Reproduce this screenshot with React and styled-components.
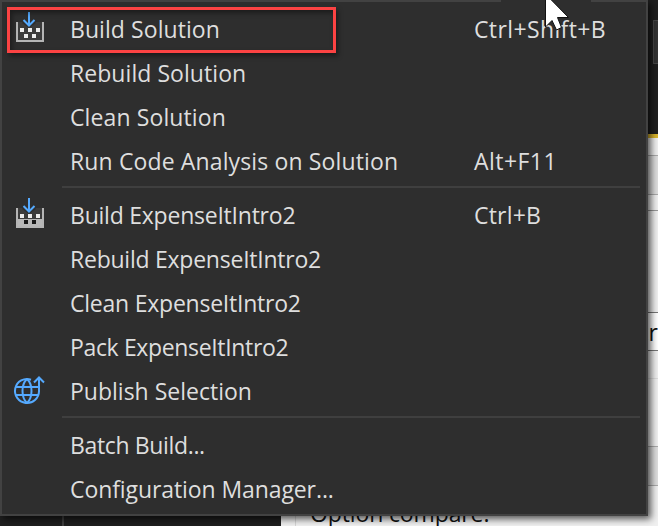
import React from "react";
import styled, { createGlobalStyle } from "styled-components";

const GlobalStyle = createGlobalStyle`
  * { box-sizing: border-box; }
  body { margin: 0; overflow: hidden; background: #1f1f1f; }
`;

const Screen = styled.main`
  position: relative;
  width: 658px;
  height: 526px;
  overflow: hidden;
  background: #1f1f1f;
  font-family: "Open Sans", "Noto Sans", sans-serif;
  font-size: 23px;
`;

const Workspace = styled.div`
  display: grid;
  grid-template-columns: 64px 217px 1fr;
  height: 526px;
`;

const Gutter = styled.div`
  border-right: 2px solid #3f3f3f;
`;

const EditorPane = styled.div`
  background: #1f1f1f;
`;

const DocumentPane = styled.div`
  display: flex;
  flex-direction: column;
  min-width: 0;
`;

const ToolStrip = styled.div`
  height: 134px;
  display: flex;
  justify-content: flex-end;
  padding-top: 20px;
`;

const ToolBox = styled.div`
  width: 5px;
  height: 44px;
  background: #333;
  border: 1px solid #484848;
  border-right: 0;
`;

const Band = styled.div`
  flex: none;
  display: flex;
  align-items: center;
  justify-content: flex-end;
  height: ${(p) => p.$h}px;
  background: ${(p) => p.$bg || "#f0f0f0"};
  border-bottom: ${(p) => (p.$line ? `1px solid ${p.$line}` : "0")};
  color: #111;
  line-height: 30px;
`;

const OptionBand = styled.div`
  flex: 1;
  margin-left: 14px;
  padding: 10px 0 0 14px;
  border-left: 1px solid #d5d5d5;
  color: #111;
  line-height: 34px;
  letter-spacing: -0.13px;
  white-space: nowrap;
`;

const OptionArea = styled.div`
  flex: 1;
  display: flex;
  min-height: 0;
  background: #f0f0f0;
`;

const Menu = styled.nav`
  position: absolute;
  left: 0;
  top: 0;
  width: 648px;
  height: 516px;
  padding-top: 6px;
  border: 2px solid #424242;
  background: #2e2e2e;
  box-shadow: 3px 3px 7px rgba(0, 0, 0, 0.65);
`;

const MenuOpening = styled.div`
  position: absolute;
  left: 499px;
  top: -2px;
  width: 90px;
  height: 2px;
  background: #2e2e2e;
`;

const Item = styled.div`
  display: grid;
  grid-template-columns: 68px 404px 1fr;
  align-items: center;
  height: 44px;
  line-height: 32px;
  color: #dedede;
  white-space: nowrap;
`;

const IconCell = styled.span`
  display: flex;
  align-items: center;
  height: 44px;
  padding-left: 10px;
`;

const Label = styled.span`
  padding-bottom: 2px;
  letter-spacing: ${(p) => p.$spacing || 0}px;
`;

const Separator = styled.div`
  height: 10px;
  margin: 0 6px 0 60px;
  padding-top: 2px;
  &::before {
    content: "";
    display: block;
    height: 2px;
    background: #3f3f3f;
  }
`;

const Highlight = styled.div`
  position: absolute;
  left: 7px;
  top: 7px;
  width: 329px;
  height: 46px;
  border: 3px solid #fc4343;
  box-shadow: 2px 3px 5px rgba(0, 0, 0, 0.45), inset 2px 3px 5px rgba(0, 0, 0, 0.4);
`;

const Pointer = styled.svg`
  position: absolute;
  left: 540px;
  top: 0;
`;

function BuildIcon({ filled }) {
  return (
    <svg width="36" height="44" viewBox="0 0 36 44">
      <path d="M5 14h26v19H5z" fill="#3b3b3b" />
      {filled && <path d="M4 25h28v9H4z" fill="#b8b8b8" />}
      <path d="M5 14v19h26V14" fill="none" stroke="#b5b5b5" strokeWidth="2" />
      <path d="M8 20h4v4H8zM16 20h4v4h-4zM24 20h4v4h-4z" fill="#ececec" />
      <path d="M12 26h4v4h-4zM20 26h4v4h-4z" fill={filled ? "#181818" : "#ececec"} />
      <path d="M11 13.5h12l1 1.5-7 5-7-5z" fill="#2e2e2e" />
      <path d="M17 4v13M11.5 12l5.5 5.5 5.5-5.5" fill="none" stroke="#55aaff" strokeWidth="2" />
    </svg>
  );
}

function PublishIcon() {
  return (
    <svg width="36" height="44" viewBox="0 0 36 44" fill="none" stroke="#55aaff" strokeWidth="2">
      <path d="M19 9.7A12 12 0 1 0 27 21" />
      <path d="M15 9c-6 5.5-6 18.5 0 24M15 9c6 5.5 6 18.5 0 24M4 17h23M4 25h22" />
      <path d="M27 22V8M22 12.5l5-5 5 5" />
    </svg>
  );
}

const groups = [
  [
    { label: "Build Solution", spacing: 0.07, keys: "Ctrl+Shift+B", keySpacing: 0.38, icon: "solution" },
    { label: "Rebuild Solution", spacing: 0.06 },
    { label: "Clean Solution", spacing: 0.11 },
    { label: "Run Code Analysis on Solution", spacing: 0.13, keys: "Alt+F11", keySpacing: 0.45 },
  ],
  [
    { label: "Build ExpenseItIntro2", spacing: -0.23, keys: "Ctrl+B", keySpacing: 0.2, icon: "project" },
    { label: "Rebuild ExpenseItIntro2", spacing: -0.24 },
    { label: "Clean ExpenseItIntro2", spacing: -0.23 },
    { label: "Pack ExpenseItIntro2", spacing: -0.35 },
    { label: "Publish Selection", icon: "publish" },
  ],
  [
    { label: "Batch Build...", spacing: -0.35 },
    { label: "Configuration Manager...", spacing: -0.09 },
  ],
];

function MenuItem({ item }) {
  return (
    <Item>
      <IconCell>
        {item.icon === "publish" && <PublishIcon />}
        {(item.icon === "solution" || item.icon === "project") && (
          <BuildIcon filled={item.icon === "project"} />
        )}
      </IconCell>
      <Label $spacing={item.spacing}>{item.label}</Label>
      <Label $spacing={item.keySpacing}>{item.keys}</Label>
    </Item>
  );
}

export default function App() {
  return (
    <Screen>
      <GlobalStyle />
      <Workspace>
        <Gutter />
        <EditorPane />
        <DocumentPane>
          <ToolStrip><ToolBox /></ToolStrip>
          <Band $h={4} $bg="#d9b52f" />
          <Band $h={18} $line="#aaa" />
          <Band $h={39} $bg="#dedede" $line="#aaa" />
          <Band $h={16} $line="#999" />
          <Band $h={102} $line="#777" />
          <Band $h={38} $bg="#fff" $line="#777">cr</Band>
          <Band $h={28} $line="#ddd" />
          <Band $h={68} $line="#aaa" />
          <Band $h={39} $bg="#dedede" $line="#aaa" />
          <OptionArea><OptionBand>Option compare:</OptionBand></OptionArea>
        </DocumentPane>
      </Workspace>
      <Menu>
        <MenuOpening />
        {groups.map((group, i) => (
          <React.Fragment key={i}>
            {i > 0 && <Separator />}
            {group.map((item) => <MenuItem key={item.label} item={item} />)}
          </React.Fragment>
        ))}
      </Menu>
      <Highlight />
      <Pointer width="32" height="34" viewBox="0 0 32 34">
        <path d="M5.5-6v33l6.5-6.5 4.5 9.5 5-2.5-4-10h11z" fill="#fff" stroke="#111" strokeWidth="1" />
      </Pointer>
    </Screen>
  );
}
